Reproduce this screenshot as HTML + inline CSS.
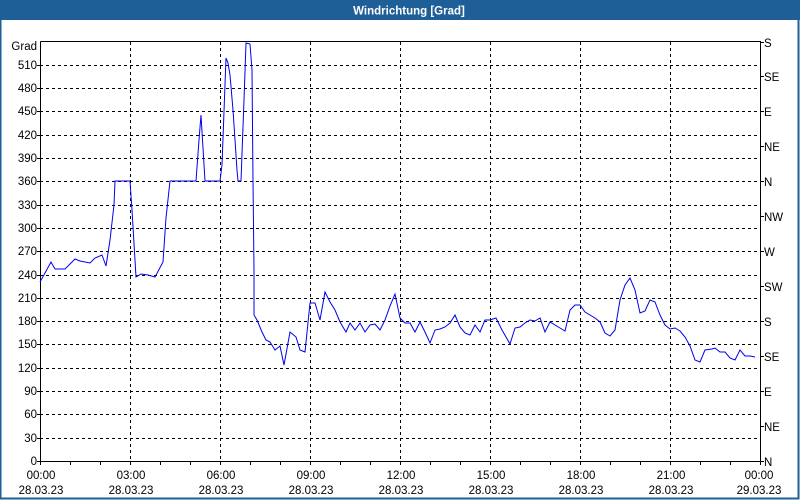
<!DOCTYPE html>
<html><head><meta charset="utf-8"><style>
html,body{margin:0;padding:0;width:800px;height:500px;overflow:hidden;background:#fff}
svg{display:block}
text{font-family:"Liberation Sans","DejaVu Sans",sans-serif;font-size:11.5px;fill:#000}
</style></head><body>
<svg width="800" height="500" viewBox="0 0 800 500" xmlns="http://www.w3.org/2000/svg">
<rect x="0" y="0" width="800" height="500" fill="#fff"/>
<rect x="0" y="0" width="800" height="20" fill="#1e5f97"/>
<rect x="0.5" y="0.5" width="798" height="498" fill="none" stroke="#1e5f97" stroke-width="2"/>
<text x="409" y="14.5" text-anchor="middle" style="font-weight:bold;font-size:11.5px;fill:#fff">Windrichtung [Grad]</text>
<g stroke="#000" stroke-width="1" stroke-dasharray="3,3" shape-rendering="crispEdges">
<line x1="40" y1="65.5" x2="760" y2="65.5"/><line x1="40" y1="88.5" x2="760" y2="88.5"/><line x1="40" y1="111.5" x2="760" y2="111.5"/><line x1="40" y1="135.5" x2="760" y2="135.5"/><line x1="40" y1="158.5" x2="760" y2="158.5"/><line x1="40" y1="181.5" x2="760" y2="181.5"/><line x1="40" y1="205.5" x2="760" y2="205.5"/><line x1="40" y1="228.5" x2="760" y2="228.5"/><line x1="40" y1="251.5" x2="760" y2="251.5"/><line x1="40" y1="275.5" x2="760" y2="275.5"/><line x1="40" y1="298.5" x2="760" y2="298.5"/><line x1="40" y1="321.5" x2="760" y2="321.5"/><line x1="40" y1="344.5" x2="760" y2="344.5"/><line x1="40" y1="368.5" x2="760" y2="368.5"/><line x1="40" y1="391.5" x2="760" y2="391.5"/><line x1="40" y1="414.5" x2="760" y2="414.5"/><line x1="40" y1="438.5" x2="760" y2="438.5"/>
<line x1="130.5" y1="42" x2="130.5" y2="461"/><line x1="220.5" y1="42" x2="220.5" y2="461"/><line x1="310.5" y1="42" x2="310.5" y2="461"/><line x1="400.5" y1="42" x2="400.5" y2="461"/><line x1="490.5" y1="42" x2="490.5" y2="461"/><line x1="580.5" y1="42" x2="580.5" y2="461"/><line x1="670.5" y1="42" x2="670.5" y2="461"/>
</g>
<g stroke="#000" stroke-width="1" shape-rendering="crispEdges" fill="none">
<polyline points="40.5,41.5 40.5,461.5 760.5,461.5 760.5,41.5 40.5,41.5"/>
<path d="M37 65.5h3M37 88.5h3M37 111.5h3M37 135.5h3M37 158.5h3M37 181.5h3M37 205.5h3M37 228.5h3M37 251.5h3M37 275.5h3M37 298.5h3M37 321.5h3M37 344.5h3M37 368.5h3M37 391.5h3M37 414.5h3M37 438.5h3M37 461.5h3"/>
<path d="M40.5 461v4M70.5 461v4M100.5 461v4M130.5 461v4M160.5 461v4M190.5 461v4M220.5 461v4M250.5 461v4M280.5 461v4M310.5 461v4M340.5 461v4M370.5 461v4M400.5 461v4M430.5 461v4M460.5 461v4M490.5 461v4M520.5 461v4M550.5 461v4M580.5 461v4M610.5 461v4M640.5 461v4M670.5 461v4M700.5 461v4M730.5 461v4M760.5 461v4"/>
<path d="M760 42.5h4M760 76.5h4M760 111.5h4M760 146.5h4M760 181.5h4M760 216.5h4M760 251.5h4M760 286.5h4M760 321.5h4M760 356.5h4M760 391.5h4M760 426.5h4M760 461.5h4"/>
</g>
<g text-anchor="end">
<text x="37" y="50">Grad</text>
<text x="37" y="69">510</text><text x="37" y="92">480</text><text x="37" y="115">450</text><text x="37" y="139">420</text><text x="37" y="162">390</text><text x="37" y="185">360</text><text x="37" y="209">330</text><text x="37" y="232">300</text><text x="37" y="255">270</text><text x="37" y="279">240</text><text x="37" y="302">210</text><text x="37" y="325">180</text><text x="37" y="348">150</text><text x="37" y="372">120</text><text x="37" y="395">90</text><text x="37" y="418">60</text><text x="37" y="442">30</text><text x="37" y="465">0</text>
</g>
<g>
<text x="764" y="47">S</text><text x="764" y="81">SE</text><text x="764" y="116">E</text><text x="764" y="151">NE</text><text x="764" y="186">N</text><text x="764" y="221">NW</text><text x="764" y="256">W</text><text x="764" y="291">SW</text><text x="764" y="326">S</text><text x="764" y="361">SE</text><text x="764" y="396">E</text><text x="764" y="431">NE</text><text x="764" y="466">N</text>
</g>
<g text-anchor="middle">
<text x="41" y="479">00:00</text><text x="41" y="494">28.03.23</text>
<text x="131" y="479">03:00</text><text x="131" y="494">28.03.23</text>
<text x="221" y="479">06:00</text><text x="221" y="494">28.03.23</text>
<text x="311" y="479">09:00</text><text x="311" y="494">28.03.23</text>
<text x="401" y="479">12:00</text><text x="401" y="494">28.03.23</text>
<text x="491" y="479">15:00</text><text x="491" y="494">28.03.23</text>
<text x="581" y="479">18:00</text><text x="581" y="494">28.03.23</text>
<text x="671" y="479">21:00</text><text x="671" y="494">28.03.23</text>
<text x="759" y="479">00:00</text><text x="759" y="494">29.03.23</text>
</g>
<polyline fill="none" stroke="#0000ee" stroke-width="1" points="40,282 45,273 51,262 55,269 65,269 75,259 80,261 90,263 95,258 102,255 106,266 110,240 114,205 115,181 130,181 132,210 136,277 141,274 148,275 155,277 163,262 166,218 170,181 196,181 199,140 201,115 205,181 220,181 222,165 226,58 228,63 230,75 233,110 237,170 238,181 241,181 244,100 246,43 250,44 252,70 253,181 254,270 254,315 257,320 262,332 266,340 270,342 275,350 280,346 284,365 290,332 296,337 300,350 305,352 310,303 315,303 320,320 325,292 330,302 335,310 340,322 346,332 350,323 355,330 360,323 365,332 370,325 375,324 380,330 385,320 390,306 395,294 400,318 405,323 410,323 415,332 420,322 425,332 430,343 435,330 440,329 445,327 450,323 455,315 460,327 465,333 470,335 475,325 480,332 485,320 490,320 496,318 502,330 510,344 515,328 520,327 525,323 530,320 535,321 540,318 545,332 550,322 560,328 565,331 570,310 575,305 580,305 585,312 595,318 600,322 605,333 610,336 615,330 620,300 625,285 630,278 635,290 640,313 645,311 650,300 655,302 660,315 665,325 670,329 675,328 680,331 685,337 690,346 695,360 700,362 705,350 712,349 715,348 720,352 725,352 730,358 735,360 740,350 745,356 750,356 755,357"/>
</svg>
</body></html>
